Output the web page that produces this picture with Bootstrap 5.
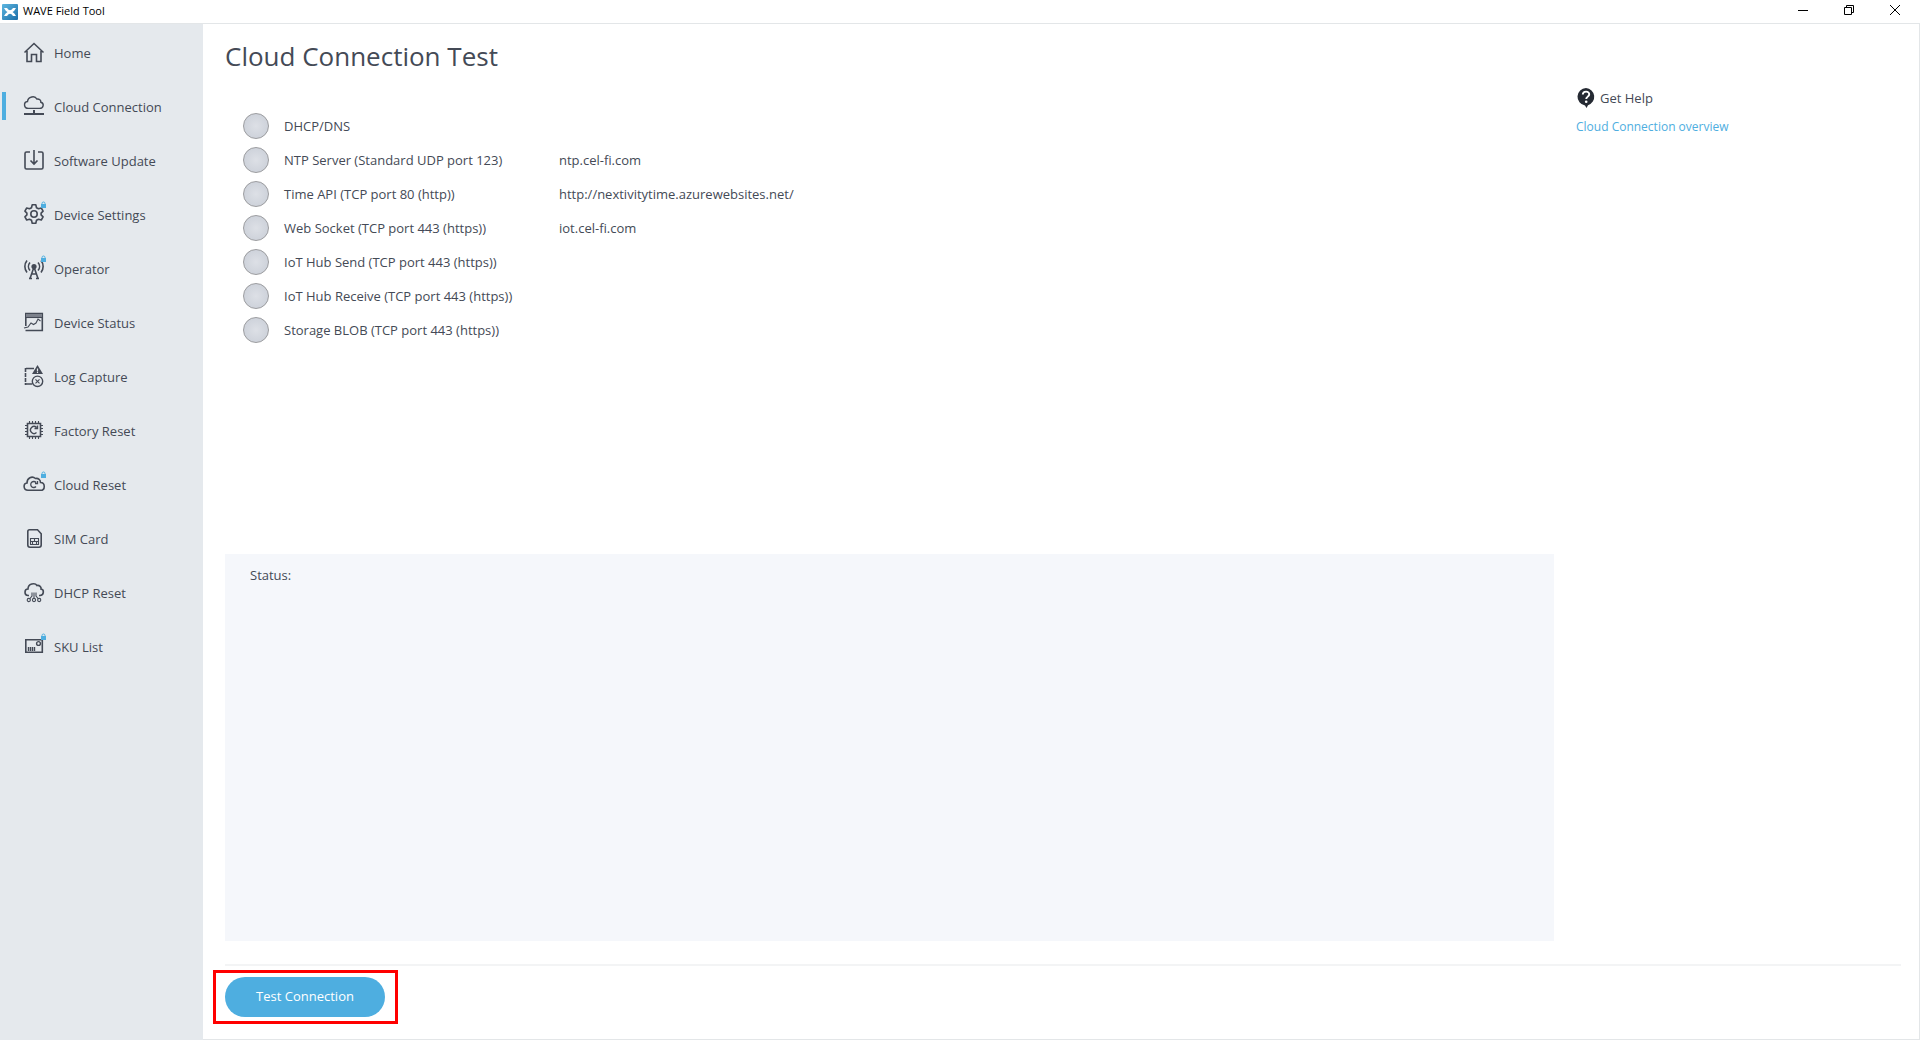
<!DOCTYPE html>
<html lang="en">
<head>
<meta charset="utf-8">
<meta name="viewport" content="width=device-width, initial-scale=1">
<title>WAVE Field Tool</title>
<link href="https://cdn.jsdelivr.net/npm/bootstrap@5.3.0/dist/css/bootstrap.min.css" rel="stylesheet">
<style>
  :root { --ink: #444a56; --accent: #4eaee0; --pane: #e5e9ed; --edge: #e3e6e8; }
  body { font-family: "Open Sans", "Noto Sans", sans-serif; font-size: 13px; line-height: 20px; color: var(--ink); background: #fff; }
  .titlebar { height: 24px; border-bottom: 1px solid var(--edge); color: #000; font-size: 11px; line-height: 22px; padding: 0 2px; gap: 5px; }
  .winbtn { width: 46px; height: 22px; padding: 0 0 2px; border: 0; background: none; line-height: 0; color: #000; }
  .sidebar { width: 203px; background: var(--pane); padding-top: 2px; }
  .sidebar .nav-link { height: 54px; padding: 0 0 0 22px; gap: 8px; color: var(--ink); position: relative; }
  .sidebar .nav-link.active::before { content: ""; position: absolute; left: 2px; top: 12px; width: 4px; height: 28px; background: var(--accent); }
  .side-icon { width: 24px; height: 24px; overflow: visible; fill: none; stroke: var(--ink); stroke-width: 1.6; flex: none; }
  .side-icon .solid { fill: var(--ink); stroke: none; }
  .side-icon .thin { stroke-width: 1.1; }
  .workspace { padding: 0 18px 22px 22px; border-right: 1px solid var(--edge); border-bottom: 1px solid var(--edge); }
  .page-title { font-size: 26px; line-height: 36px; margin: 14px 0 35px; font-weight: 400; }
  .tests { padding-left: 18px; min-height: 445px; }
  .test-row { height: 34px; }
  .lamp { width: 26px; height: 26px; border-radius: 50%; border: 1px solid #9b9c9f; background: radial-gradient(#dde0e6, #c8cdd6); margin-right: 15px; }
  .test-name { width: 275px; }
  .status-box { background: #f5f7fb; padding: 11px 25px; }
  .help { width: 347px; padding: 64px 0 0 22px; }
  .help-link { font-size: 12px; color: var(--accent); text-decoration: none; }
  .actions { border-top: 2px solid #f3f4f5; margin-top: 23px; padding-top: 11px; }
  .marked { position: relative; }
  .marked::after { content: ""; position: absolute; inset: -7px -13px -7px -12px; border: 3px solid #f00; pointer-events: none; }
  .btn-test { --bs-btn-bg: var(--accent); --bs-btn-color: #fff; --bs-btn-hover-bg: #3a9dd2; --bs-btn-hover-color: #fff; width: 160px; height: 40px; font-size: 13px; border: 0; }
</style>
</head>
<body class="d-flex flex-column min-vh-100">
<svg width="0" height="0" class="position-absolute" aria-hidden="true">
  <defs>
    <g id="lock"><rect x="19" y="1" width="5" height="4" fill="#4eaee0" stroke="none"/><path d="M20 1.500V.5a1.500 1.500 0 0 1 3 0v1" fill="none" stroke="#4eaee0" stroke-width="1"/></g>
    <linearGradient id="appfill" x1="0" y1="0" x2="1" y2="1"><stop offset="0" stop-color="#5cb6e0"/><stop offset="1" stop-color="#1c6ea8"/></linearGradient>
  </defs>
</svg>

<header class="titlebar d-flex align-items-start">
  <svg width="16" height="16" viewBox="0 0 16 16" class="mt-1" aria-hidden="true"><rect width="16" height="16" rx="1" fill="url(#appfill)"/><path d="M2 4h3Q8 8.500 11 4h3Q12.500 7 10.500 8 12.500 9 14 12h-3Q8 7.500 5 12H2Q3.500 9 5.500 8 3.500 7 2 4z" fill="#fff"/></svg>
  <span>WAVE Field Tool</span>
  <div class="ms-auto d-flex">
    <button class="winbtn" type="button" aria-label="Minimize"><svg width="12" height="12" viewBox="0 0 12 12" stroke="currentColor"><path d="M1 6.500h10"/></svg></button>
    <button class="winbtn" type="button" aria-label="Restore"><svg width="12" height="12" viewBox="0 0 12 12" stroke="currentColor" fill="none"><path d="M1.500 3.500h7v7h-7zM3.500 3.500v-2h7v7h-2"/></svg></button>
    <button class="winbtn" type="button" aria-label="Close"><svg width="12" height="12" viewBox="0 0 12 12" stroke="currentColor"><path d="M1 1l10 10M11 1L1 11"/></svg></button>
  </div>
</header>

<div class="d-flex flex-grow-1">
  <nav class="sidebar nav flex-column flex-nowrap flex-shrink-0">
    <a class="nav-link d-flex align-items-center" href="#"><svg class="side-icon"><path d="M2.500 11.500L12 2.500l9.500 9M5 10v10.500h4.500v-7h5v7H19V10"/></svg>Home</a>
    <a class="nav-link active d-flex align-items-center" href="#" aria-current="page"><svg class="side-icon"><path d="M6.500 13.400C1.500 13.400 1.300 7 5.500 6.500 6 1.500 13 .2 14.800 4c2.700-.3 4.200 1.200 4 3.200 3.700.8 3 6.200-1.300 6.200z" stroke-width="1.400"/><path d="M12 15v4" stroke-width="2"/><path d="M2 19h20" stroke-width="2"/></svg>Cloud Connection</a>
    <a class="nav-link d-flex align-items-center" href="#"><svg class="side-icon"><path d="M8 3H4.500Q3 3 3 4.500v14Q3 20 4.500 20h15q1.500 0 1.500-1.500v-14Q21 3 19.500 3H16M12 1v13M8.500 11.500L12 15l3.500-3.500"/></svg>Software Update</a>
    <a class="nav-link d-flex align-items-center" href="#"><svg class="side-icon"><circle cx="12" cy="11" r="3.200"/><path d="M10.200 1.800h3.600l.7 2.900 2 1.100 2.800-.8 1.800 3.100-2 2v1.800l2 2-1.800 3.100-2.800-.8-2 1.100-.7 2.900h-3.600l-.7-2.900-2-1.100-2.800.8-1.800-3.100 2-2v-1.800l-2-2L4.700 5l2.800.8 2-1.100z" stroke-linejoin="round"/><use href="#lock"/></svg>Device Settings</a>
    <a class="nav-link d-flex align-items-center" href="#"><svg class="side-icon"><circle class="solid" cx="12" cy="9.500" r="2.600"/><path d="M12 10L8 21.500M12 10l4 11.500M9.500 17h5M7 21.500h3M14 21.500h3M8 5.500a6 6 0 0 0 0 8M16 5.500a6 6 0 0 1 0 8M5 3.500a9.500 9.500 0 0 0 0 12M19 3.500a9.500 9.500 0 0 1 0 12"/><use href="#lock"/></svg>Operator</a>
    <a class="nav-link d-flex align-items-center" href="#"><svg class="side-icon"><path d="M3.800 15V2.500h16.500v17H3.500"/><path d="M4 4.500h16" stroke="#7d828c" stroke-width="3"/><path d="M4 6.500h16" class="thin"/><path d="M2 17l4-1 3-4 2.500 1.500L14 12l2-4 2.500 2" class="thin"/></svg>Device Status</a>
    <a class="nav-link d-flex align-items-center" href="#"><svg class="side-icon"><path d="M12 3.500H4M10 19H3.500"/><path d="M3.500 3v17" stroke-dasharray="4 1"/><path class="solid" d="M15.500 0L21 9H10z"/><path d="M15.500 3.500v3M15.500 7v1" stroke="#e5e9ed" stroke-width="1.200"/><circle cx="15.500" cy="16.300" r="5.200" stroke-width="1.400"/><path class="thin" d="M13.500 14.300l4 4M17.500 14.300l-4 4"/></svg>Log Capture</a>
    <a class="nav-link d-flex align-items-center" href="#"><svg class="side-icon"><path d="M5.500 4.500h13v13h-13z"/><path class="thin" d="M7.500 4V2M10.500 4V2M13.500 4V2M16.500 4V2M7.500 20v-2M10.500 20v-2M13.500 20v-2M16.500 20v-2M5 6.500H3M5 9.500H3M5 12.500H3M5 15.500H3M21 6.500h-2M21 9.500h-2M21 12.500h-2M21 15.500h-2"/><path d="M14.500 13.500a3.500 3.500 0 1 1 0-5M15.500 6.500v3h-3" stroke-width="1.400"/></svg>Factory Reset</a>
    <a class="nav-link d-flex align-items-center" href="#"><svg class="side-icon"><path d="M6 17.300c-5 0-5-7-1-7.300C5 5 10 2.500 13.500 5.500c3-.5 5 1.500 5 4 5 0 5 7.800 0 7.800z"/><path d="M14 13.500a3 3 0 1 1 0-4M15.500 8v2.500H13" stroke-width="1.300"/><use href="#lock"/></svg>Cloud Reset</a>
    <a class="nav-link d-flex align-items-center" href="#"><svg class="side-icon"><path d="M7.500 2.800h8l3.700 4V18q0 2.200-2.200 2.200H8Q5.800 20.200 5.800 18V4.500q0-1.700 1.700-1.700z"/><path class="thin" d="M8.500 11.500h8v6h-8zM8.500 14.500h8M12.500 11.500v3M10.500 14.500v3M14.500 14.500v3"/></svg>SIM Card</a>
    <a class="nav-link d-flex align-items-center" href="#"><svg class="side-icon"><path d="M7 14.500H6c-4 0-4-6.500 0-6.500 0-5.500 7-6.500 9-3.500 2.500-.5 4.500 1.500 4 3.500 3.500.5 3 6.500-1 6.500h-1"/><path class="thin" d="M10 11.500V15l-2.500 3M12 11.500V17M14 11.500V15l2.500 3"/><circle class="thin" cx="6.800" cy="19" r="1.600"/><circle class="thin" cx="12" cy="19" r="1.600"/><circle class="thin" cx="17.200" cy="19" r="1.600"/></svg>DHCP Reset</a>
    <a class="nav-link d-flex align-items-center" href="#"><svg class="side-icon"><path d="M3.800 4.800h16.500v12.500H3.800z"/><circle cx="16.500" cy="8.500" r="1.900" stroke-width="1.400"/><path d="M6.500 12v4M8.500 12v4M10.500 12v4M12.500 12v4" stroke-width="1.400"/><use href="#lock"/></svg>SKU List</a>
  </nav>

  <main class="workspace flex-grow-1 d-flex flex-column">
    <div class="d-flex flex-grow-1">
      <section class="flex-grow-1 d-flex flex-column">
        <h1 class="page-title">Cloud Connection Test</h1>
        <ul class="tests list-unstyled mb-0">
          <li class="test-row d-flex align-items-center"><span class="lamp"></span><span class="test-name">DHCP/DNS</span></li>
          <li class="test-row d-flex align-items-center"><span class="lamp"></span><span class="test-name">NTP Server (Standard UDP port 123)</span><span>ntp.cel-fi.com</span></li>
          <li class="test-row d-flex align-items-center"><span class="lamp"></span><span class="test-name">Time API (TCP port 80 (http))</span><span>http://nextivitytime.azurewebsites.net/</span></li>
          <li class="test-row d-flex align-items-center"><span class="lamp"></span><span class="test-name">Web Socket (TCP port 443 (https))</span><span>iot.cel-fi.com</span></li>
          <li class="test-row d-flex align-items-center"><span class="lamp"></span><span class="test-name">IoT Hub Send (TCP port 443 (https))</span></li>
          <li class="test-row d-flex align-items-center"><span class="lamp"></span><span class="test-name">IoT Hub Receive (TCP port 443 (https))</span></li>
          <li class="test-row d-flex align-items-center"><span class="lamp"></span><span class="test-name">Storage BLOB (TCP port 443 (https))</span></li>
        </ul>
        <div class="status-box flex-grow-1">Status:</div>
      </section>
      <aside class="help flex-shrink-0">
        <div class="d-flex align-items-center mb-2">
          <svg width="20" height="20" viewBox="0 0 20 20" class="me-1" aria-hidden="true"><path d="M10 0a8.800 8.800 0 0 1 2 17.200L10.500 20 9 17.500A8.800 8.800 0 0 1 10 0z" fill="#252a33"/><path d="M6.800 6.500C7 2.500 13.500 2.800 13.200 6.500c0 2-3 2.300-3 4.500" fill="none" stroke="#fff" stroke-width="1.900"/><circle cx="10.200" cy="13.700" r="1.300" fill="#fff"/></svg>
          <span>Get Help</span>
        </div>
        <a class="help-link" href="#">Cloud Connection overview</a>
      </aside>
    </div>
    <footer class="actions d-flex">
      <div class="marked"><button type="button" class="btn btn-test rounded-pill">Test Connection</button></div>
    </footer>
  </main>
</div>
<script src="https://cdn.jsdelivr.net/npm/bootstrap@5.3.0/dist/js/bootstrap.bundle.min.js"></script>
</body>
</html>
